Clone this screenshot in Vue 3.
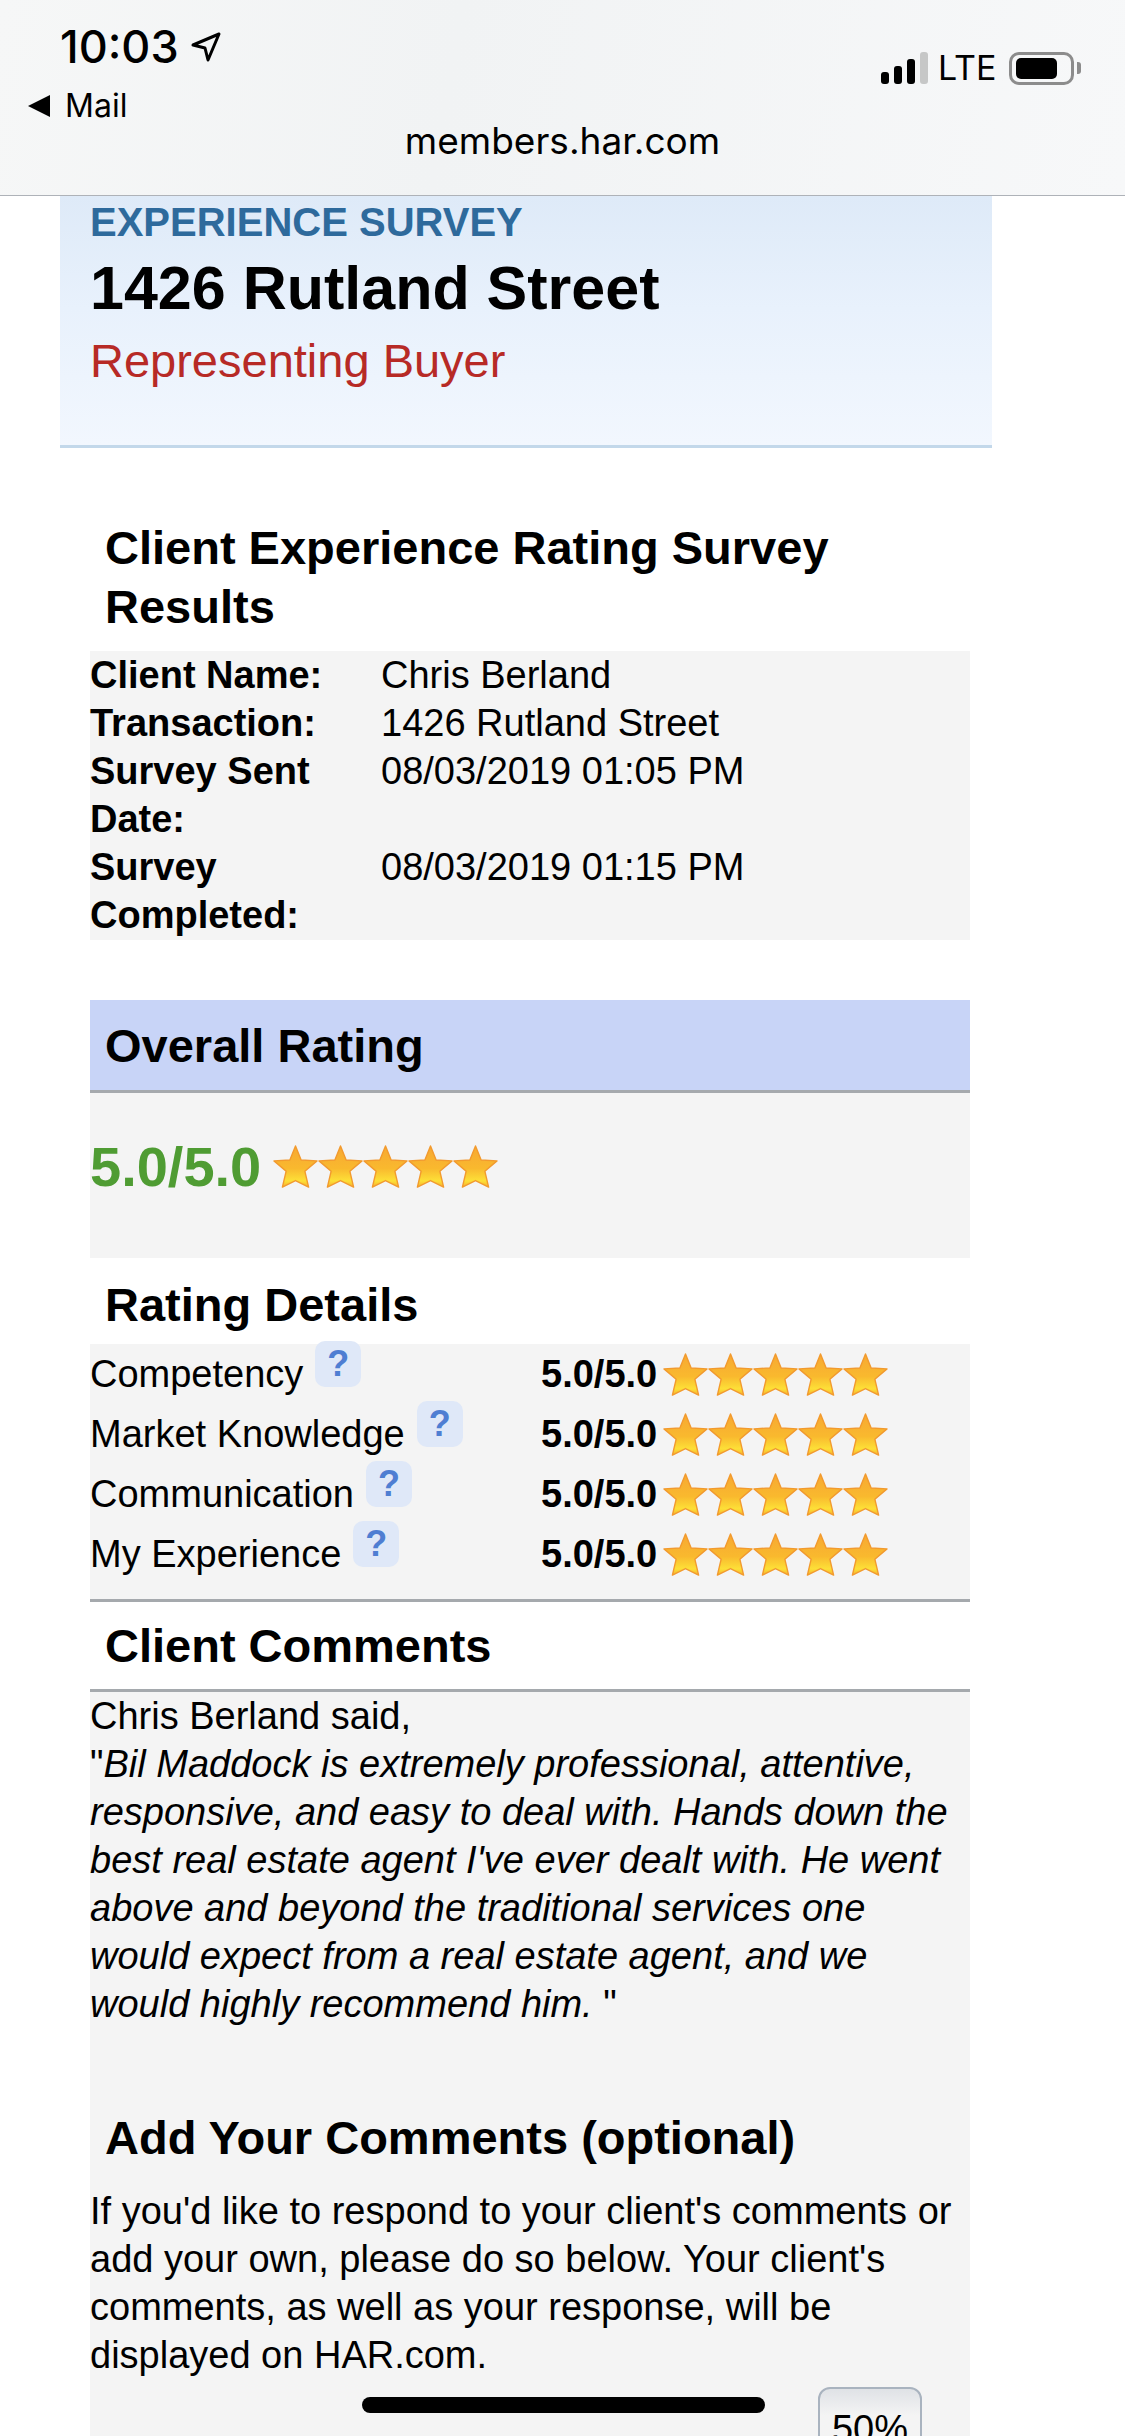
<template>
  <div class="screen">
    <header class="topbar">
      <div class="status-left">
        <div class="time-row">
          <span class="time">10:03</span>
          <svg class="arrow" width="30" height="32" viewBox="0 0 30 32">
            <path d="M2 14 L28 3 L17 29 L14 17 Z" fill="none" stroke="#000" stroke-width="3" stroke-linejoin="round" />
          </svg>
        </div>
        <div class="back-row">
          <span class="back-tri"></span>
          <span class="back-label">Mail</span>
        </div>
      </div>
      <div class="status-right">
        <div class="signal">
          <span class="bar b1"></span>
          <span class="bar b2"></span>
          <span class="bar b3"></span>
          <span class="bar b4"></span>
        </div>
        <span class="lte">LTE</span>
        <div class="battery"><span class="battery-fill"></span></div>
        <span class="battery-cap"></span>
      </div>
      <div class="url">members.har.com</div>
    </header>

    <main class="page">
      <section class="hero">
        <div class="eyebrow">EXPERIENCE SURVEY</div>
        <h1 class="address">1426 Rutland Street</h1>
        <div class="represent">Representing Buyer</div>
      </section>

      <section class="content">
        <h2 class="title first">Client Experience Rating Survey Results</h2>
        <div class="info">
          <div v-for="row in info" :key="row.label" class="info-row">
            <strong class="info-label">{{ row.label }}</strong>
            <span>{{ row.value }}</span>
          </div>
        </div>

        <div class="overall-head"><h2 class="title">Overall Rating</h2></div>
        <div class="overall">
          <span class="score">5.0/5.0</span>
          <div class="stars big">
            <svg v-for="n in 5" :key="n" viewBox="0 0 48 46" class="star"><use href="#star-shape" /></svg>
          </div>
        </div>

        <h2 class="title details-title">Rating Details</h2>
        <div class="details">
          <div v-for="item in details" :key="item" class="detail-row">
            <div class="detail-name">
              <span>{{ item }}</span>
              <span class="help">?</span>
            </div>
            <strong class="detail-score">5.0/5.0</strong>
            <div class="stars">
              <svg v-for="n in 5" :key="n" viewBox="0 0 48 46" class="star"><use href="#star-shape" /></svg>
            </div>
          </div>
        </div>

        <div class="comments-head"><h2 class="title">Client Comments</h2></div>
        <div class="comments">
          <div>Chris Berland said,</div>
          <div class="quote">"<em>Bil Maddock is extremely professional, attentive, responsive, and easy to deal with. Hands down the best real estate agent I've ever dealt with. He went above and beyond the traditional services one would expect from a real estate agent, and we would highly recommend him. </em>"</div>
          <h2 class="title add-title">Add Your Comments (optional)</h2>
          <p class="add-text">If you'd like to respond to your client's comments or add your own, please do so below. Your client's comments, as well as your response, will be displayed on HAR.com.</p>
          <div class="pct-row"><div class="pct">50%</div></div>
        </div>
      </section>
    </main>

    <div class="home-bar"></div>

    <svg width="0" height="0" class="defs">
      <defs>
        <linearGradient id="star-fill" x1="0" y1="0" x2="0" y2="1">
          <stop offset="0" stop-color="#f7a833" />
          <stop offset="0.55" stop-color="#f9b92e" />
          <stop offset="0.85" stop-color="#fde037" />
          <stop offset="1" stop-color="#f6b02c" />
        </linearGradient>
        <path id="star-shape" d="M24 1 L30 16 L47 17 L34 28 L38 45 L24 38 L10 45 L14 28 L1 17 L18 16 Z" fill="url(#star-fill)" stroke="#f29a2e" stroke-width="1.5" stroke-linejoin="round" />
      </defs>
    </svg>
  </div>
</template>

<script setup>
const info = [
  { label: 'Client Name:', value: 'Chris Berland' },
  { label: 'Transaction:', value: '1426 Rutland Street' },
  { label: 'Survey Sent Date:', value: '08/03/2019 01:05 PM' },
  { label: 'Survey Completed:', value: '08/03/2019 01:15 PM' }
]

const details = ['Competency', 'Market Knowledge', 'Communication', 'My Experience']
</script>

<style>
html, body {
  margin: 0;
  background: #fff;
}
</style>

<style scoped>
.screen {
  position: relative;
  width: 1125px;
  height: 2436px;
  overflow: hidden;
  background: #fff;
  color: #000;
  font-family: "Liberation Sans", Arial, sans-serif;
}

.topbar {
  position: relative;
  height: 196px;
  box-sizing: border-box;
  border-bottom: 1px solid #aeb2b8;
  background: linear-gradient(100deg, #f6f7f7, #f1f3f4 40%, #f7f8f9);
}

.status-left {
  position: absolute;
  left: 28px;
  top: 21px;
}

.time-row {
  display: flex;
  align-items: center;
  padding-left: 32px;
}

.time {
  font-family: Inter, sans-serif;
  font-size: 45px;
  font-weight: 500;
  line-height: 52px;
}

.arrow {
  margin-left: 12px;
}

.back-row {
  display: flex;
  align-items: center;
  margin-top: 13px;
}

.back-tri {
  width: 0;
  height: 0;
  border-top: 11px solid transparent;
  border-bottom: 11px solid transparent;
  border-right: 22px solid #000;
}

.back-label {
  margin-left: 15px;
  font-family: Inter, sans-serif;
  font-size: 32px;
  line-height: 40px;
}

.status-right {
  position: absolute;
  left: 881px;
  top: 50px;
  display: flex;
  align-items: center;
  height: 36px;
}

.signal {
  display: flex;
  align-items: flex-end;
  gap: 5px;
  height: 32px;
}

.bar {
  width: 8px;
  border-radius: 3px;
  background: #000;
}

.b1 { height: 12px; }
.b2 { height: 18px; }
.b3 { height: 25px; }
.b4 { height: 32px; background: #c6c7c7; }

.lte {
  margin-left: 10px;
  font-family: Inter, sans-serif;
  font-size: 34px;
  line-height: 36px;
}

.battery {
  display: flex;
  align-items: center;
  box-sizing: border-box;
  width: 65px;
  height: 33px;
  margin-left: 13px;
  padding: 4px;
  border: 3px solid #8c8c8c;
  border-radius: 10px;
}

.battery-fill {
  width: 41px;
  height: 21px;
  border-radius: 5px;
  background: #000;
}

.battery-cap {
  width: 4px;
  height: 12px;
  margin-left: 3px;
  border-radius: 0 3px 3px 0;
  background: #8c8c8c;
}

.url {
  position: absolute;
  left: 0;
  right: 0;
  top: 119px;
  text-align: center;
  font-family: Inter, sans-serif;
  font-size: 37px;
  line-height: 44px;
}

.page {
  padding-left: 60px;
}

.hero {
  box-sizing: border-box;
  width: 932px;
  height: 252px;
  padding: 3px 0 0 30px;
  border-bottom: 3px solid #c3d8ea;
  background: linear-gradient(#deeaf8, #e8f1fc 45%, #f2f7fe);
}

.eyebrow {
  color: #2e6a9c;
  font-size: 40px;
  font-weight: 700;
  line-height: 46px;
}

.address {
  margin: 7px 0 0;
  font-size: 61px;
  font-weight: 700;
  line-height: 72px;
}

.represent {
  margin-top: 9px;
  color: #b72a26;
  font-size: 47px;
  line-height: 56px;
}

.content {
  width: 880px;
  padding: 70px 0 0 30px;
}

.title {
  margin: 0;
  padding-left: 15px;
  font-size: 47px;
  font-weight: 700;
  line-height: 59px;
}

.info {
  margin-top: 15px;
  padding-bottom: 1px;
  background: #f4f4f4;
  font-size: 38px;
  line-height: 48px;
}

.info-row {
  display: grid;
  grid-template-columns: 291px 1fr;
}

.info-label {
  width: 250px;
}

.overall-head {
  display: flex;
  align-items: center;
  box-sizing: border-box;
  height: 93px;
  margin-top: 60px;
  border-bottom: 3px solid #a5a9ad;
  background: #c8d4f7;
}

.overall {
  display: flex;
  align-items: center;
  height: 165px;
  padding-bottom: 18px;
  box-sizing: border-box;
  background: #f4f4f4;
}

.score {
  color: #4f9c33;
  font-size: 56px;
  font-weight: 700;
}

.stars {
  display: flex;
}

.stars.big {
  margin-left: 12px;
}

.star {
  display: block;
  width: 45px;
  height: 43px;
}

.details-title {
  padding-top: 17px;
  padding-bottom: 10px;
}

.details {
  padding-bottom: 15px;
  background: #f4f4f4;
}

.detail-row {
  display: grid;
  grid-template-columns: 451px 122px 1fr;
  align-items: center;
  height: 60px;
  font-size: 38px;
}

.detail-name {
  display: flex;
  align-items: center;
}

.help {
  display: flex;
  align-items: center;
  justify-content: center;
  width: 46px;
  height: 46px;
  margin: -20px 0 0 12px;
  border-radius: 10px;
  background: #dfe8f8;
  color: #4f7ed2;
  font-size: 36px;
  font-weight: 700;
}

.detail-score {
  font-size: 38px;
}

.comments-head {
  display: flex;
  align-items: center;
  box-sizing: border-box;
  height: 93px;
  border-top: 3px solid #a5a9ad;
  border-bottom: 3px solid #a5a9ad;
}

.comments {
  height: 1000px;
  background: #f4f4f4;
  font-size: 38px;
  line-height: 48px;
}

.add-title {
  padding-top: 80px;
}

.add-text {
  margin: 20px 0 0;
}

.pct-row {
  display: flex;
  justify-content: flex-end;
  padding: 8px 48px 0 0;
}

.pct {
  box-sizing: border-box;
  width: 104px;
  height: 70px;
  padding-top: 16px;
  border: 2px solid #a9b3bf;
  border-radius: 12px;
  background: linear-gradient(#dfe2e6, #f4f4f4 40%);
  text-align: center;
  font-size: 38px;
}

.home-bar {
  position: absolute;
  left: 362px;
  top: 2397px;
  width: 403px;
  height: 16px;
  border-radius: 8px;
  background: #000;
}

.defs {
  position: absolute;
}
</style>
